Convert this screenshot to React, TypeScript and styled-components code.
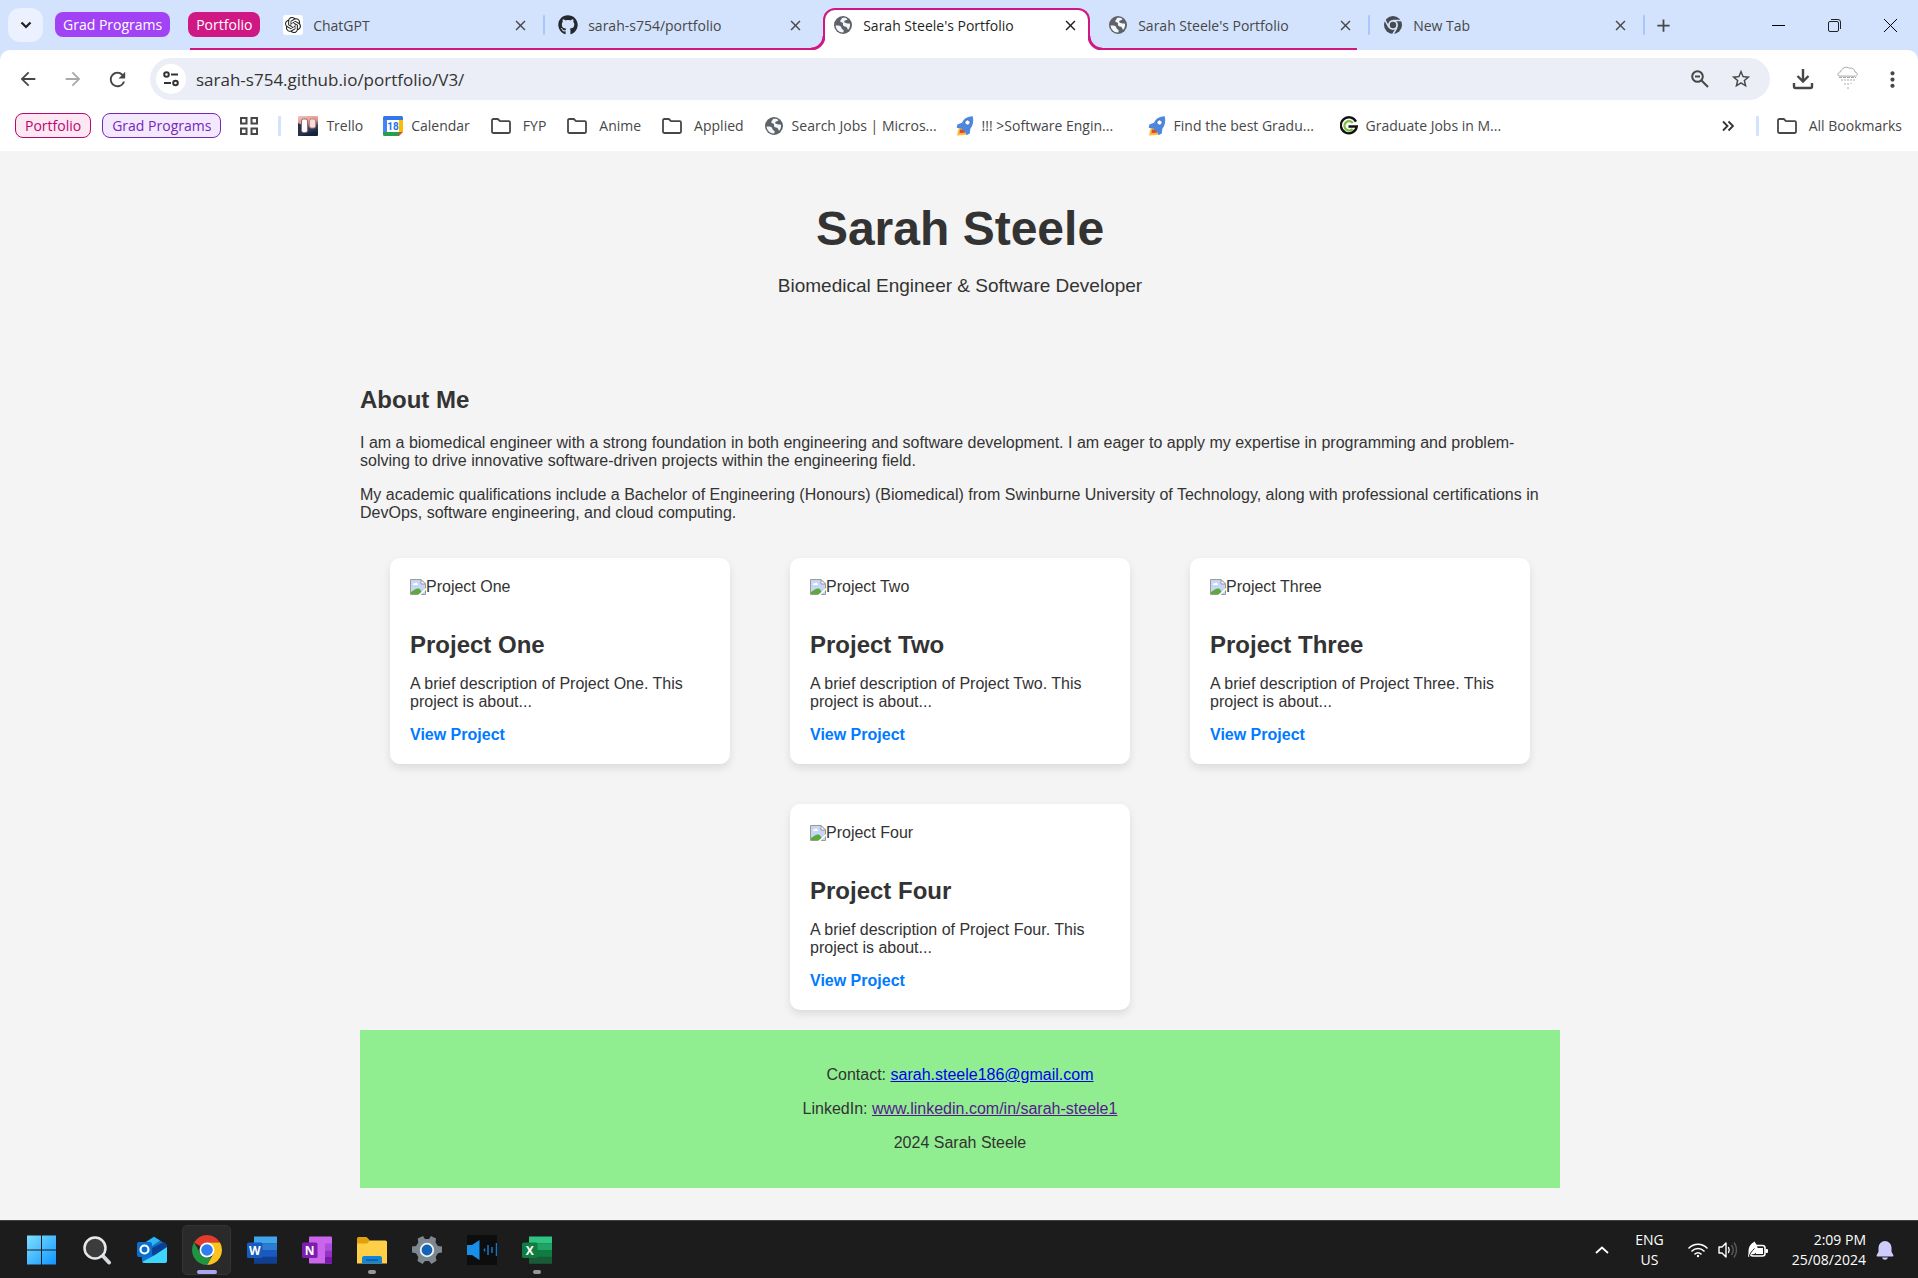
import React from 'react';
import styled, { createGlobalStyle } from 'styled-components';
import { SiOpenai } from 'react-icons/si';
import { FaGithub } from 'react-icons/fa';
import {
  MdArrowBack,
  MdArrowForward,
  MdRefresh,
  MdMoreVert,
  MdClose,
  MdAdd,
  MdStarBorder,
} from 'react-icons/md';

const UI_FONT = '"Open Sans", "Noto Sans", sans-serif';
const PINK = '#d01884';
const STRIP = '#d3e3fd';

const GlobalStyle = createGlobalStyle`
  *, *::before, *::after { box-sizing: border-box; }
  body { margin: 0; background: #f4f4f4; }
  button { font: inherit; border: 0; padding: 0; background: none; color: inherit; cursor: pointer; }
  svg { display: block; flex: none; }
`;

const Screen = styled.div`
  min-height: 100vh;
  display: flex;
  flex-direction: column;
`;

/* ---------- Browser frame ---------- */

const BrowserHead = styled.header`
  background: ${STRIP};
  font-family: ${UI_FONT};
  font-size: 14px;
  line-height: 20px;
  color: #474747;
`;

const TabStrip = styled.div`
  display: flex;
  height: 50px;
  padding-left: 8px;
`;

const TabSearch = styled.button`
  flex: none;
  display: grid;
  place-items: center;
  width: 35px;
  height: 34px;
  margin: 8px 12px 0 0;
  border-radius: 12px;
  background: #ebf1fe;
`;

const GroupChip = styled.button<{ $color: string }>`
  flex: none;
  height: 25px;
  margin: 12px 18px 0 0;
  padding: 0 8px;
  border-radius: 8px;
  background: ${(p) => p.$color};
  color: #fff;
  line-height: 24px;
  white-space: nowrap;
`;

const TabGroup = styled.div`
  display: flex;
  flex: 0 1 auto;
  min-width: 0;
`;

const GroupStart = styled.div`
  flex: none;
  width: 81px;
  background: linear-gradient(${PINK}, ${PINK}) 2px 100% / 100% 2px no-repeat;
`;

const TabItem = styled.div<{ $active?: boolean; $grouped?: boolean; $last?: boolean }>`
  position: relative;
  z-index: ${(p) => (p.$active ? 1 : 0)};
  flex: 0 1 275px;
  min-width: 0;
  display: flex;
  align-items: flex-start;
  width: 275px;
  padding: ${(p) => (p.$active ? '8px 4px 0' : '0 0 0 14px')};
  background: ${(p) =>
    p.$grouped && !p.$active
      ? `linear-gradient(${PINK}, ${PINK}) 0 100% / ${p.$last ? 'calc(100% - 12px)' : '100%'} 2px no-repeat`
      : 'none'};
`;

const ActiveShape = styled.div`
  position: relative;
  flex: 1;
  display: flex;
  min-width: 0;
  height: 42px;
  padding-left: 8px;
  border: 2px solid ${PINK};
  border-bottom: 0;
  border-radius: 12px 12px 0 0;
  background: #fff;
  color: #1f1f1f;
  &::before,
  &::after {
    content: '';
    position: absolute;
    bottom: 0;
    width: 14px;
    height: 14px;
  }
  &::before {
    left: -14px;
    background: radial-gradient(circle at 0 0, ${STRIP} 11px, ${PINK} 12px, ${PINK} 14px, #fff 15px);
  }
  &::after {
    right: -14px;
    background: radial-gradient(circle at 100% 0, ${STRIP} 11px, ${PINK} 12px, ${PINK} 14px, #fff 15px);
  }
`;

const TabBody = styled.div<{ $active?: boolean }>`
  flex: 1;
  min-width: 0;
  display: flex;
  align-items: center;
  gap: 10px;
  height: ${(p) => (p.$active ? '30px' : '50px')};
`;

const TabTitle = styled.span`
  flex: 1;
  padding-top: 2px;
  overflow: hidden;
  white-space: nowrap;
`;

const TabClose = styled.button<{ $active?: boolean }>`
  flex: none;
  width: 20px;
  height: 20px;
  display: grid;
  place-items: center;
  margin-right: ${(p) => (p.$active ? '8px' : '14px')};
`;

const TabSeparator = styled.span`
  position: absolute;
  right: -1px;
  top: 15px;
  width: 2px;
  height: 20px;
  border-radius: 1px;
  background: #a8c7fa;
`;

const NewTab = styled.button`
  width: 38px;
  height: 50px;
  display: grid;
  place-items: center;
  flex: none;
`;

const WindowControls = styled.div`
  display: flex;
  margin-left: auto;
  flex: none;
`;

const WindowButton = styled.button`
  width: 56px;
  height: 50px;
  display: grid;
  place-items: center;
`;

const Panel = styled.div`
  background: #fff;
  border-radius: 10px 10px 0 0;
`;

const Toolbar = styled.div`
  display: flex;
  align-items: center;
  height: 58px;
  padding: 0 3px 0 5px;
`;

const ToolButton = styled.button<{ $muted?: boolean }>`
  flex: none;
  width: 45px;
  height: 42px;
  display: grid;
  place-items: center;
  color: ${(p) => (p.$muted ? '#a9a9a9' : '#474747')};
`;

const AddressBar = styled.div`
  flex: 1;
  display: flex;
  align-items: center;
  height: 42px;
  margin: 0 10px;
  padding: 0 9px 0 6px;
  border-radius: 21px;
  background: #ebeef7;
`;

const SiteInfo = styled.button`
  width: 30px;
  height: 30px;
  border-radius: 50%;
  background: #fff;
  display: grid;
  place-items: center;
`;

const UrlInput = styled.input`
  flex: 1;
  min-width: 0;
  border: 0;
  outline: 0;
  padding: 0;
  margin-left: 10px;
  background: transparent;
  color: #333;
  font-family: ${UI_FONT};
  font-size: 17px;
`;

const AddressAction = styled.button`
  width: 41px;
  height: 42px;
  display: grid;
  place-items: center;
`;

const BookmarkBar = styled.nav`
  display: flex;
  align-items: center;
  height: 43px;
  padding: 0 16px 8px 15px;
  white-space: nowrap;
`;

const SavedGroup = styled.button<{ $ink: string; $fill: string }>`
  height: 25px;
  margin-right: 11px;
  padding: 0 9px;
  border: 1px solid ${(p) => p.$ink};
  border-radius: 8px;
  background: ${(p) => p.$fill};
  color: ${(p) => p.$ink};
  line-height: 22px;
`;

const AppsButton = styled.button`
  width: 34px;
  height: 25px;
  display: grid;
  place-items: center;
`;

const BarDivider = styled.span<{ $before: number; $after: number }>`
  width: 3px;
  height: 20px;
  margin: 0 ${(p) => p.$after}px 0 ${(p) => p.$before}px;
  border-radius: 1px;
  background: ${STRIP};
`;

const Bookmark = styled.a<{ $wide?: boolean }>`
  display: flex;
  align-items: center;
  gap: 8px;
  width: ${(p) => (p.$wide ? '172px' : 'auto')};
  margin-right: 20px;
  color: inherit;
  text-decoration: none;
`;

const BookmarkEnd = styled.div`
  display: flex;
  align-items: center;
  margin-left: auto;
`;

const AllBookmarks = styled.button`
  display: flex;
  align-items: center;
  gap: 8px;
`;

/* ---------- Portfolio page ---------- */

const Page = styled.main`
  flex: 1;
  padding-left: 2px;
  background: #f4f4f4;
  color: #333;
  font-family: "Liberation Sans", Arial, sans-serif;
  font-size: 16px;
  line-height: 18px;
`;

const Hero = styled.section`
  padding: 51px 20px 49px;
  text-align: center;
  h1 {
    margin: 0 0 19px;
    font-size: 48px;
    line-height: 54px;
  }
  p {
    margin: 0;
    font-size: 19px;
    line-height: 22px;
  }
`;

const Container = styled.div`
  max-width: 1200px;
  margin: 0 auto;
`;

const About = styled.section`
  padding-top: 40px;
  h2 {
    margin: 0 0 21px;
    font-size: 24px;
    line-height: 27px;
  }
  p {
    margin: 0 0 16px;
  }
`;

const Projects = styled.section`
  display: flex;
  flex-wrap: wrap;
  justify-content: space-around;
`;

const Card = styled.article`
  width: 340px;
  margin: 20px;
  padding: 20px;
  border-radius: 10px;
  background: #fff;
  box-shadow: 0 4px 8px rgba(0, 0, 0, 0.1);
  h2 {
    margin: 35px 0 17px;
    font-size: 24px;
    line-height: 27px;
  }
  p {
    margin: 0 0 15px;
  }
`;

const MissingImage = styled.div`
  display: flex;
  align-items: center;
`;

const ProjectLink = styled.a`
  display: block;
  color: #007bff;
  font-weight: bold;
  text-decoration: none;
`;

const ContactFooter = styled.footer`
  padding: 36px 20px 20px;
  background: #90ee90;
  text-align: center;
  p {
    margin: 0 0 16px;
  }
`;

const FooterLink = styled.a<{ $visited?: boolean }>`
  color: ${(p) => (p.$visited ? '#551a8b' : '#0000ee')};
`;

/* ---------- Taskbar ---------- */

const Taskbar = styled.footer`
  display: flex;
  align-items: center;
  height: 58px;
  padding: 0 24px 0 17px;
  border-top: 1px solid #3c403f;
  background: #1c1c1c;
  color: #fff;
  font-family: ${UI_FONT};
  font-size: 14px;
  line-height: 20px;
`;

const AppButton = styled.button<{ $focused?: boolean; $running?: boolean }>`
  position: relative;
  width: 49px;
  height: 50px;
  margin-right: 6px;
  display: grid;
  place-items: center;
  border: 1px solid ${(p) => (p.$focused ? '#343434' : 'transparent')};
  border-radius: 5px;
  background: ${(p) => (p.$focused ? '#2a2a2a' : 'transparent')};
  &::after {
    content: '';
    display: ${(p) => (p.$focused || p.$running ? 'block' : 'none')};
    position: absolute;
    bottom: 0;
    width: ${(p) => (p.$focused ? '20px' : '8px')};
    height: 4px;
    border-radius: 2px;
    background: ${(p) => (p.$focused ? '#a9a7ec' : '#979797')};
  }
`;

const Tray = styled.div`
  display: flex;
  align-items: center;
  margin-left: auto;
`;

const TrayButton = styled.button`
  height: 48px;
  display: flex;
  align-items: center;
  gap: 10px;
`;

const TrayText = styled.span<{ $align: string }>`
  display: block;
  text-align: ${(p) => p.$align};
`;

const Language = styled(TrayButton)`
  margin: 0 24px 0 26px;
`;

const Clock = styled(TrayButton)`
  margin-left: 24px;
`;

/* ---------- Icons ---------- */

const Globe = () => (
  <svg width="20" height="20" viewBox="0 0 20 20">
    <circle cx="10" cy="10" r="9" fill="#5f6368" />
    <path d="M9 3c2.400-.5 4.200 0 5.400 1.200-.6 1.200-2.700.9-3.200 2-.3.900.5 1.400 1.500 1.800 1.300.5 3 .3 4.300.7.300 2.700-.5 4.700-1.900 6-.9-.5-.6-1.600-1.200-2.300-1-1.100-3-.6-3.700-1.800-.7-1.200.3-2-.5-2.800-.7-.6-2-.2-2.400-1.200-.4-1.300 1.500-2.200 1.700-3.600z" fill="#f2f6fe" />
    <path d="M2.700 10.200c1.800.3 3.500.2 4.800 1 1.100.8.700 2 1.500 2.700.7.600 1.600.6 1.700 1.600.1.600-.3 1.200-.6 1.900-4.300.1-7.500-3.100-7.400-7.200z" fill="#f2f6fe" />
  </svg>
);

const ChromeMono = () => (
  <svg width="20" height="20" viewBox="0 0 20 20">
    <circle cx="10" cy="10" r="9" fill="#474b50" />
    <circle cx="10" cy="10" r="5" fill={STRIP} />
    <circle cx="10" cy="10" r="3.200" fill="#474b50" />
    <path d="M10 5.400h8.400M6 12.300 1.900 5.200M14 12.300l-4.200 7.200" stroke={STRIP} strokeWidth="1.500" />
  </svg>
);

const Folder = () => (
  <svg width="25" height="20" viewBox="0 0 25 20">
    <path d="M2 4.200c0-.7.500-1.200 1.200-1.200h4.600l2.200 2.200h8.800c.7 0 1.200.5 1.200 1.200v9.400c0 .7-.5 1.200-1.200 1.200H3.200c-.7 0-1.200-.5-1.200-1.200z" fill="none" stroke="#474747" strokeWidth="1.800" />
  </svg>
);

const Trello = () => (
  <svg width="20" height="20" viewBox="0 0 20 20">
    <defs>
      <linearGradient id="trelloSky" x1="0" y1="0" x2="0.300" y2="1">
        <stop offset="0" stopColor="#f6c6b8" />
        <stop offset="0.450" stopColor="#d98f90" />
        <stop offset="0.700" stopColor="#3a4764" />
        <stop offset="1" stopColor="#14243d" />
      </linearGradient>
    </defs>
    <rect width="20" height="20" rx="1" fill="url(#trelloSky)" />
    <path d="M0 7l4 2v11H0z" fill="#26324d" />
    <rect x="3.500" y="3" width="6" height="13.500" rx="2" fill="#fff" stroke="#8b6c74" />
    <rect x="11.500" y="3" width="6" height="9" rx="2" fill="#f7dfd8" stroke="#c87f80" />
  </svg>
);

const CalendarIcon = () => (
  <svg width="20" height="20" viewBox="0 0 20 20">
    <path d="M0 1.500Q0 0 1.500 0h17Q20 0 20 1.500V5H0z" fill="#3378e8" />
    <path d="M0 4h4v12H0z" fill="#4285f4" />
    <path d="M16 4h4v12h-4z" fill="#fbbc04" />
    <path d="M0 16h16v4H1.500Q0 20 0 18.500z" fill="#289e4b" />
    <path d="M16 16h4l-4 4z" fill="#ea4335" />
    <rect x="4" y="4" width="12" height="12" fill="#fff" />
    <text x="10" y="14" textAnchor="middle" fontFamily="Roboto, sans-serif" fontWeight="700" fontSize="10" fill="#1a73e8">18</text>
  </svg>
);

const Rocket = () => (
  <svg width="18" height="20" viewBox="0 0 18 20">
    <path d="M2.500 13 1 19.500 9 19l4-4-6-5z" fill="#fbbc3b" />
    <path d="M4 13.500 3.500 17l5-.3 2-3z" fill="#e5432d" />
    <path d="M16.800.2C11.500.4 8 2.400 6 6.700L1.300 8.400.8 12l4.400.5 4.300 4 1 2.700 3.300-1.600.5-4.700C17 9.400 17.900 5.500 16.800.2z" fill="#4f86e0" />
    <circle cx="11.500" cy="6.500" r="2.600" fill="#fff" stroke="#2f62b8" strokeWidth=".8" />
  </svg>
);

const GradLogo = () => (
  <svg width="18" height="20" viewBox="1 0 18 20" fill="none">
    <path d="M17 5.600A8 8 0 1 0 17.800 10.500H9.500" stroke="#111" strokeWidth="2.300" />
    <path d="M13.800 6.900A4.700 4.700 0 1 0 13.600 13" stroke="#7ac143" strokeWidth="2.200" />
  </svg>
);

const RainCloud = () => (
  <svg width="24" height="26" viewBox="0 0 24 26" fill="none" stroke="#a8a8a8" strokeWidth="1">
    <path d="M3 10C.8 9 2 6 4.500 6 5.500 2 10 0 13.500 2.200c3-.7 5.500 1.500 5.500 3.800 3 .5 3 3.500.5 4.200z" />
    <path d="M3 11.500h17" strokeDasharray="3 1" />
    <path d="M6 13v4M9 13v7M12 13v12M15 13v5M18 13v4" strokeDasharray="2 2" />
  </svg>
);

const BrokenImage = () => (
  <svg width="16" height="16" viewBox="0 0 16 16">
    <path d="M.5.500H11L15.500 5V15.500H.5z" fill="#c6d6f6" stroke="#9a9a9a" />
    <path d="M3 5.500c0-1 1-1.500 2-1.200.5-1.100 2-1 2.300.2 1 0 1.200 1.300.3 1.500H3.500Q3 6 3 5.500z" fill="#fff" />
    <path d="M1 15v-2c2-1 4-3.500 6.500-3.500S11 11 12.500 15z" fill="#5aab3b" />
    <path d="M16 9v2l-5.500 5H8z" fill="#fff" />
    <path d="M11 .5V5h4.500z" fill="#fff" stroke="#9a9a9a" />
  </svg>
);

const ZoomOut = () => (
  <svg width="20" height="20" viewBox="0 0 20 20" fill="none" stroke="#474747" strokeWidth="2">
    <circle cx="7.500" cy="7.500" r="5.300" />
    <path d="M11.500 11.500 18 18M5 7.500h5" />
  </svg>
);

const Tune = () => (
  <svg width="18" height="18" viewBox="0 0 18 18" fill="none" stroke="#333" strokeWidth="2">
    <circle cx="4.500" cy="4.500" r="2.300" />
    <circle cx="13.500" cy="13" r="2.300" />
    <path d="M9 4.500h7M2 13h7" />
  </svg>
);

const StartLogo = () => (
  <svg width="30" height="30" viewBox="0 0 30 30">
    <defs>
      <linearGradient id="startBlue" gradientUnits="userSpaceOnUse" x1="0" y1="0" x2="29" y2="30">
        <stop offset="0" stopColor="#82e0ff" />
        <stop offset="1" stopColor="#0c95ff" />
      </linearGradient>
    </defs>
    <path d="M0 .5h14V14.500H0zM15 .5h14V14.500H15zM0 15.500h14V29.500H0zM15 15.500h14V29.500H15z" fill="url(#startBlue)" />
  </svg>
);

const SearchLogo = () => (
  <svg width="30" height="30" viewBox="0 0 30 30" fill="none">
    <path d="m20 20 7 7.500" stroke="#d5d9dc" strokeWidth="4" strokeLinecap="round" />
    <circle cx="13" cy="13" r="10.500" fill="#3c3c3c" stroke="#e6e8ea" strokeWidth="2.500" />
  </svg>
);

const OutlookLogo = () => (
  <svg width="30" height="30" viewBox="0 0 30 30">
    <path d="M4 10 17 1.500 30 10v15q0 3-3 3H8q-3 0-3-3z" fill="#1272c8" />
    <path d="M6 9 17 2l6 3.500L12 13z" fill="#2fb6f0" />
    <path d="M11 15 27 7l3 3v3L16 21z" fill="#0b3f91" />
    <path d="M30 12v14q0 2-3 2H8q-2 0-3-1l13-7z" fill="#3fd5fa" />
    <rect y="7" width="15" height="15" rx="2" fill="#0a6ed1" />
    <circle cx="7.500" cy="14.500" r="4" fill="none" stroke="#fff" strokeWidth="2.200" />
  </svg>
);

const ChromeLogo = () => (
  <svg width="30" height="30" viewBox="0 0 30 30">
    <path d="M15 15 2.010 7.500A15 15 0 0 1 27.990 7.500H15z" fill="#e33b2e" />
    <path d="M15 7.500h12.990A15 15 0 0 1 15 30l6.500-11.250z" fill="#fcc31e" />
    <path d="M2.010 7.500 8.500 18.750 15 22.500h4.330L15 30A15 15 0 0 1 2.010 7.500z" fill="#229342" />
    <circle cx="15" cy="15" r="7.500" fill="#fff" />
    <circle cx="15" cy="15" r="5.800" fill="#2f7df0" />
  </svg>
);

const OfficeLogo = ({ letter, bands, badge }: { letter: string; bands: string[]; badge: string }) => (
  <svg width="30" height="30" viewBox="0 0 30 30">
    {bands.map((c, i) => (
      <rect key={i} x="7" y={1.5 + i * 6.75} width="23" height="7" fill={c} />
    ))}
    <rect y="7.500" width="15.500" height="15.500" rx="1.500" fill={badge} />
    <text x="7.700" y="19.500" textAnchor="middle" fontFamily="Open Sans, sans-serif" fontWeight="700" fontSize="12" fill="#fff">{letter}</text>
  </svg>
);

const OneNoteLogo = () => (
  <svg width="30" height="30" viewBox="0 0 30 30">
    <rect x="7" y="1.500" width="23" height="27" rx="1" fill="#cb66ec" />
    <path d="M23 8.500h7v7h-7z" fill="#ad4bdc" />
    <path d="M23 15.500h7V22h-7z" fill="#9332c5" />
    <path d="M23 22h7v6.500h-7z" fill="#7719aa" />
    <rect y="7.500" width="15.500" height="15.500" rx="1.500" fill="#7f1dac" />
    <text x="7.700" y="19.500" textAnchor="middle" fontFamily="Open Sans, sans-serif" fontWeight="700" fontSize="12" fill="#fff">N</text>
  </svg>
);

const ExplorerLogo = () => (
  <svg width="30" height="30" viewBox="0 0 30 30">
    <path d="M0 3.500Q0 2 1.500 2h8L13 5.500V10H0z" fill="#e0a010" />
    <path d="M0 8.500h10l3-3h15.500Q30 5.500 30 7v21.500H0z" fill="#ffcf48" />
    <path d="M5 28.500V23q0-2 2-2h16q2 0 2 2v5.500z" fill="#1583d8" />
    <path d="M9 25h12" stroke="#0a4f93" strokeWidth="1.200" />
  </svg>
);

const SettingsLogo = () => (
  <svg width="30" height="30" viewBox="0 0 30 30">
    <path d="m11 1 2 3h4l2-3 5 2.500-.5 4L26 11l4 .5v6l-4 .8-2.300 3.500.8 4L19.500 29 17 26h-4l-2.500 3-5-3 .8-4L4 18.300l-4-.8v-6l4-.5 2.300-3.500-.6-4z" fill="#7d8790" />
    <circle cx="15" cy="15" r="6.300" fill="#1263b4" stroke="#eef2f5" strokeWidth="1.800" />
  </svg>
);

const SoundLogo = () => (
  <svg width="30" height="30" viewBox="0 0 30 30">
    <rect width="30" height="30" fill="#0d0d0e" />
    <path d="M0 10h5l7.500-5v20L5 20H0z" fill="#188fe8" />
    <path d="M17.500 13.500v3M21 10v10M25 12v6M29.500 8v13" stroke="#1477c9" strokeWidth="1.500" />
  </svg>
);

const Wifi = () => (
  <svg width="20" height="16" viewBox="0 0 20 16" fill="none" stroke="#fff" strokeWidth="1.600" strokeLinecap="round">
    <path d="M1 6a12.700 12.700 0 0 1 18 0M4 9a8.500 8.500 0 0 1 12 0M7 12a4.200 4.200 0 0 1 6 0" />
    <circle cx="10" cy="14" r="1.200" fill="#fff" stroke="none" />
  </svg>
);

const Volume = () => (
  <svg width="20" height="18" viewBox="0 0 20 18" fill="none" stroke="#fff" strokeWidth="1.400">
    <path d="M1 6h3l4-4v14l-4-4H1z" strokeLinejoin="round" />
    <path d="M10.500 6.500q1.500 2.500 0 5" strokeLinecap="round" />
    <path d="M13.500 4q3.500 5 0 10M16 1.500q5 7.500 0 15" stroke="#5a5a5a" />
  </svg>
);

const Battery = () => (
  <svg width="20" height="18" viewBox="0 0 20 18">
    <rect x="2.500" y="4.500" width="14.500" height="10.500" rx="2.500" fill="none" stroke="#fff" strokeWidth="1.600" />
    <rect x="8" y="7" width="7" height="6" fill="#fff" />
    <rect x="17.500" y="8" width="2.500" height="4" rx="1" fill="#fff" />
    <path d="M0 16c0-2 .5-2 .5-5C.5 5 3 3 6.500.5 8 3 10 5 9.500 8.500 9 12 6 14 3 13l-1.500 3z" fill="#fff" />
    <path d="M1 16C2 12 4 10 6.500 7.500" stroke="#1c1c1c" fill="none" />
  </svg>
);

const Bell = () => (
  <svg width="18" height="20" viewBox="0 0 18 20" fill="#cfccfb">
    <path d="M2.500 7.500a6.500 6.500 0 0 1 13 0v4.200l1.900 3.600q.3 1.200-.9 1.200h-15q-1.200 0-.9-1.200l1.900-3.600zM6 17.500h6q-.7 2.300-3 2.300t-3-2.300z" />
  </svg>
);

/* ---------- Composition ---------- */

interface TabProps {
  icon: React.ReactNode;
  title: string;
  active?: boolean;
  grouped?: boolean;
  last?: boolean;
  separator?: boolean;
}

const Tab = ({ icon, title, active, grouped, last, separator }: TabProps) => {
  const body = (
    <TabBody $active={active}>
      {icon}
      <TabTitle>{title}</TabTitle>
      <TabClose $active={active} aria-label={`Close ${title}`}>
        <MdClose size={17} />
      </TabClose>
    </TabBody>
  );
  return (
    <TabItem $active={active} $grouped={grouped} $last={last}>
      {active ? <ActiveShape>{body}</ActiveShape> : body}
      {separator && <TabSeparator />}
    </TabItem>
  );
};

const IconTile = styled.span`
  display: grid;
  place-items: center;
  width: 20px;
  height: 20px;
  border-radius: 3px;
  background: #fff;
  color: #222;
`;

const bookmarks = [
  { label: 'Trello', icon: <Trello /> },
  { label: 'Calendar', icon: <CalendarIcon /> },
  { label: 'FYP', icon: <Folder /> },
  { label: 'Anime', icon: <Folder /> },
  { label: 'Applied', icon: <Folder /> },
  { label: 'Search Jobs | Micros...', icon: <Globe />, wide: true },
  { label: '!!! >Software Engin...', icon: <Rocket />, wide: true },
  { label: 'Find the best Gradu...', icon: <Rocket />, wide: true },
  { label: 'Graduate Jobs in M...', icon: <GradLogo />, wide: true },
];

const projects = ['Project One', 'Project Two', 'Project Three', 'Project Four'];

const apps = [
  { name: 'Start', icon: <StartLogo /> },
  { name: 'Search', icon: <SearchLogo /> },
  { name: 'Outlook', icon: <OutlookLogo /> },
  { name: 'Chrome', icon: <ChromeLogo />, focused: true },
  { name: 'Word', icon: <OfficeLogo letter="W" badge="#185abd" bands={['#41a5ee', '#2b7cd3', '#185abd', '#103f91']} /> },
  { name: 'OneNote', icon: <OneNoteLogo /> },
  { name: 'File Explorer', icon: <ExplorerLogo />, running: true },
  { name: 'Settings', icon: <SettingsLogo /> },
  { name: 'Sound', icon: <SoundLogo /> },
  { name: 'Excel', icon: <OfficeLogo letter="X" badge="#107c41" bands={['#2fc481', '#21a366', '#107c41', '#185c37']} />, running: true },
];

export default function App() {
  return (
    <Screen>
      <GlobalStyle />
      <BrowserHead>
        <TabStrip>
          <TabSearch aria-label="Search tabs">
            <svg width="12" height="8" viewBox="0 0 12 8" fill="none" stroke="#1f1f1f" strokeWidth="2.200">
              <path d="m1.500 1.500 4.500 4.500 4.500-4.500" />
            </svg>
          </TabSearch>
          <GroupChip $color="#a142f4">Grad Programs</GroupChip>
          <TabGroup>
            <GroupStart>
              <GroupChip $color={PINK}>Portfolio</GroupChip>
            </GroupStart>
            <Tab icon={<IconTile><SiOpenai size={16} /></IconTile>} title="ChatGPT" grouped separator />
            <Tab icon={<FaGithub size={20} color="#24292f" />} title="sarah-s754/portfolio" grouped />
            <Tab icon={<Globe />} title="Sarah Steele's Portfolio" grouped active />
            <Tab icon={<Globe />} title="Sarah Steele's Portfolio" grouped last separator />
          </TabGroup>
          <Tab icon={<ChromeMono />} title="New Tab" separator />
          <NewTab aria-label="New tab"><MdAdd size={21} /></NewTab>
          <WindowControls>
            <WindowButton aria-label="Minimize">
              <svg width="13" height="13" viewBox="0 0 13 13"><path d="M0 6.500h13" stroke="#000" /></svg>
            </WindowButton>
            <WindowButton aria-label="Restore">
              <svg width="13" height="13" viewBox="0 0 13 13" fill="none" stroke="#222">
                <rect x=".5" y="2.500" width="10" height="10" rx="1.500" />
                <path d="M3 .5h7q2.500 0 2.500 2.500v7" />
              </svg>
            </WindowButton>
            <WindowButton aria-label="Close window">
              <svg width="13" height="13" viewBox="0 0 13 13" stroke="#000"><path d="m0 0 13 13M13 0 0 13" /></svg>
            </WindowButton>
          </WindowControls>
        </TabStrip>

        <Panel>
          <Toolbar>
            <ToolButton aria-label="Back"><MdArrowBack size={22} /></ToolButton>
            <ToolButton aria-label="Forward" $muted><MdArrowForward size={22} /></ToolButton>
            <ToolButton aria-label="Reload"><MdRefresh size={23} /></ToolButton>
            <AddressBar>
              <SiteInfo aria-label="Site information"><Tune /></SiteInfo>
              <UrlInput aria-label="Address" type="text" defaultValue="sarah-s754.github.io/portfolio/V3/" />
              <AddressAction aria-label="Zoom"><ZoomOut /></AddressAction>
              <AddressAction aria-label="Bookmark this page"><MdStarBorder size={22} /></AddressAction>
            </AddressBar>
            <ToolButton aria-label="Downloads">
              <svg width="22" height="22" viewBox="0 0 22 22" fill="none" stroke="#474747" strokeWidth="2.400">
                <path d="M11 1v12M5.500 8l5.500 5.500L16.500 8M2 15v3.500q0 1.500 1.500 1.500h15q1.500 0 1.500-1.500V15" />
              </svg>
            </ToolButton>
            <ToolButton aria-label="Profile"><RainCloud /></ToolButton>
            <ToolButton aria-label="Menu"><MdMoreVert size={25} /></ToolButton>
          </Toolbar>

          <BookmarkBar>
            <SavedGroup $ink="#b80672" $fill="#fde7f3">Portfolio</SavedGroup>
            <SavedGroup $ink="#7627bb" $fill="#f3e8fd">Grad Programs</SavedGroup>
            <AppsButton aria-label="Apps">
              <svg width="18" height="18" viewBox="0 0 18 18" fill="none" stroke="#474747" strokeWidth="2">
                <path d="M1 1h5.500v5.500H1zM11.500 1H17v5.500h-5.500zM1 11.500h5.500V17H1zM11.500 11.500H17V17h-5.500z" />
              </svg>
            </AppsButton>
            <BarDivider $before={12} $after={17} />
            {bookmarks.map((b) => (
              <Bookmark key={b.label} href="#" $wide={b.wide}>
                {b.icon}
                {b.label}
              </Bookmark>
            ))}
            <BookmarkEnd>
              <button aria-label="More bookmarks">
                <svg width="12" height="12" viewBox="0 0 12 12" fill="none" stroke="#333" strokeWidth="1.800">
                  <path d="m1 1.500 4.500 4.500L1 10.500M6.500 1.500 11 6l-4.500 4.500" />
                </svg>
              </button>
              <BarDivider $before={22} $after={17} />
              <AllBookmarks><Folder />All Bookmarks</AllBookmarks>
            </BookmarkEnd>
          </BookmarkBar>
        </Panel>
      </BrowserHead>

      <Page>
        <Hero>
          <h1>Sarah Steele</h1>
          <p>Biomedical Engineer &amp; Software Developer</p>
        </Hero>
        <Container>
          <About>
            <h2>About Me</h2>
            <p>
              I am a biomedical engineer with a strong foundation in both engineering and software development. I am
              eager to apply my expertise in programming and problem-solving to drive innovative software-driven
              projects within the engineering field.
            </p>
            <p>
              My academic qualifications include a Bachelor of Engineering (Honours) (Biomedical) from Swinburne
              University of Technology, along with professional certifications in DevOps, software engineering, and
              cloud computing.
            </p>
          </About>
          <Projects>
            {projects.map((name) => (
              <Card key={name}>
                <MissingImage><BrokenImage />{name}</MissingImage>
                <h2>{name}</h2>
                <p>{`A brief description of ${name}. This project is about...`}</p>
                <ProjectLink href="#">View Project</ProjectLink>
              </Card>
            ))}
          </Projects>
          <ContactFooter>
            <p>Contact: <FooterLink href="mailto:sarah.steele186@gmail.com">sarah.steele186@gmail.com</FooterLink></p>
            <p>LinkedIn: <FooterLink $visited href="#">www.linkedin.com/in/sarah-steele1</FooterLink></p>
            <p>2024 Sarah Steele</p>
          </ContactFooter>
        </Container>
      </Page>

      <Taskbar>
        {apps.map((a) => (
          <AppButton key={a.name} aria-label={a.name} $focused={a.focused} $running={a.running}>
            {a.icon}
          </AppButton>
        ))}
        <Tray>
          <TrayButton aria-label="Show hidden icons">
            <svg width="14" height="8" viewBox="0 0 14 8" fill="none" stroke="#fff" strokeWidth="1.800">
              <path d="m1 7 6-5.500L13 7" />
            </svg>
          </TrayButton>
          <Language><TrayText $align="center">ENG<br />US</TrayText></Language>
          <TrayButton aria-label="Network, volume and battery"><Wifi /><Volume /><Battery /></TrayButton>
          <Clock><TrayText $align="right">2:09 PM<br />25/08/2024</TrayText><Bell /></Clock>
        </Tray>
      </Taskbar>
    </Screen>
  );
}
